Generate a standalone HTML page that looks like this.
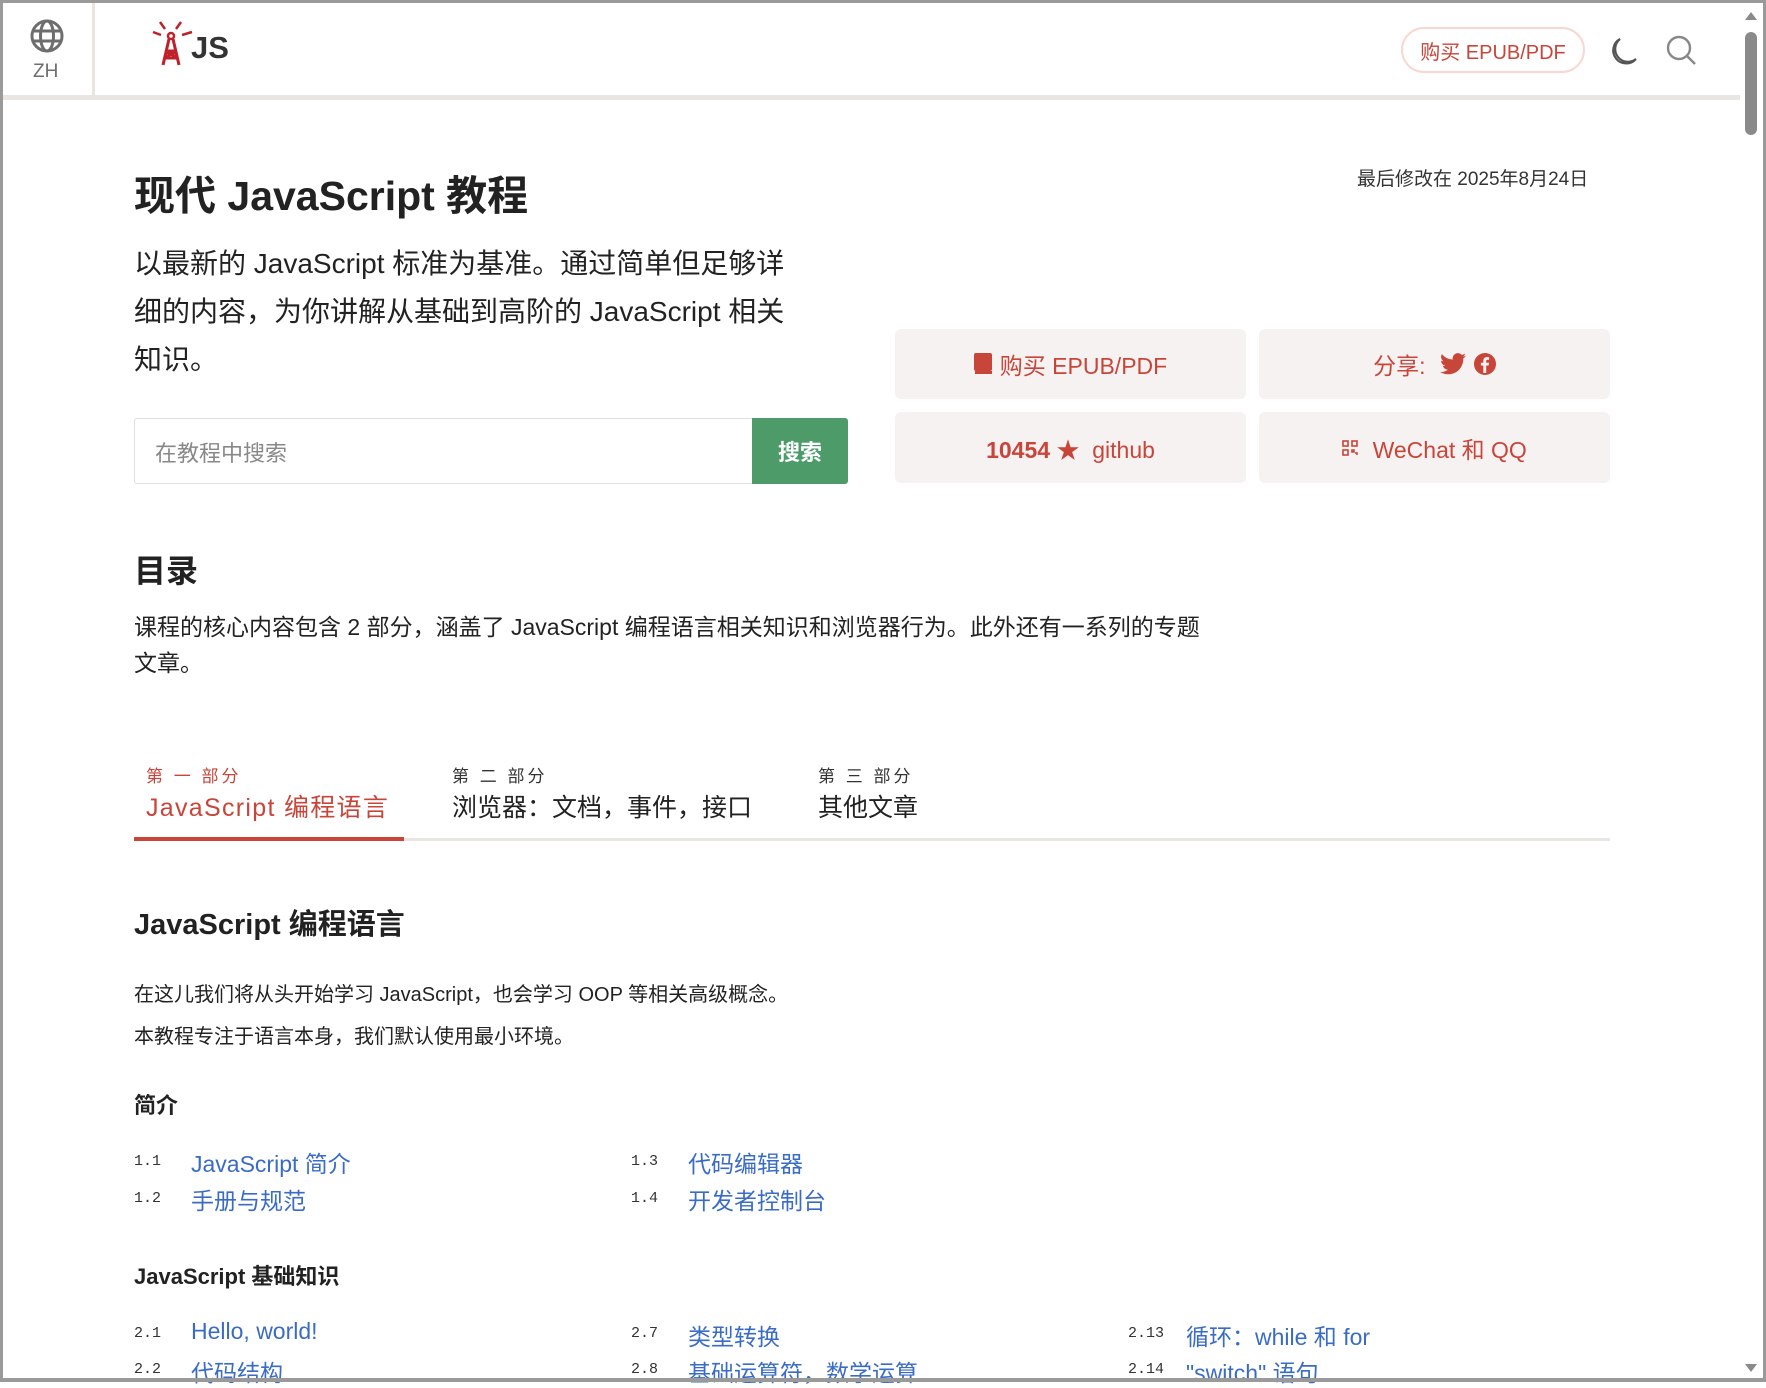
<!DOCTYPE html>
<html><head><meta charset="utf-8"><style>
*{margin:0;padding:0;box-sizing:border-box}
body{width:1766px;height:1382px;overflow:hidden;background:#fff;font-family:"Liberation Sans","Noto Sans CJK SC",sans-serif;color:#333;position:relative}
.a{position:absolute;white-space:nowrap}
.frame{position:absolute;left:0;top:0;width:1766px;height:1382px;border:3px solid #9a9a9a;border-bottom-width:4px;pointer-events:none}
.red{color:#c8453a}
.card{position:absolute;background:#f7f2f2;border-radius:6px;color:#c8453a;font-size:23px;display:flex;align-items:center;justify-content:center;gap:8px}
.num{font-family:"Liberation Mono",monospace;font-size:15px;color:#333}
.lnk{color:#3a6cc6;font-size:23px}
</style></head><body>
<!-- header -->
<div class="a" style="left:92px;top:3px;width:3px;height:94px;background:#e8e5e2"></div>
<div class="a" style="left:3px;top:95px;width:1737px;height:5px;background:#e8e5e2"></div>
<svg class="a" style="left:30px;top:19px" width="34" height="34" viewBox="0 0 34 34" fill="none" stroke="#6e6e6e" stroke-width="3"><circle cx="17" cy="17" r="15"/><ellipse cx="17" cy="17" rx="6.5" ry="15"/><line x1="2" y1="12" x2="32" y2="12"/><line x1="2" y1="22" x2="32" y2="22"/></svg>
<div class="a" style="left:33px;top:61px;font-size:19px;color:#6e6e6e">ZH</div>
<svg class="a" style="left:152px;top:18px" width="50" height="50" viewBox="0 0 50 50" stroke="#c0202a" stroke-width="2.5" fill="none"><line x1="8" y1="4" x2="13" y2="11"/><line x1="29" y1="4" x2="24" y2="11"/><line x1="1" y1="14" x2="9" y2="17"/><line x1="40" y1="14" x2="30" y2="17"/><circle cx="19" cy="18" r="3"/><path d="M17 21 L11 47 M21 21 L27 47 M13 33 L25 33 M12 40 L26 40 M13 33 L26 40 M25 33 L12 40" stroke-width="3"/></svg>
<div class="a" style="left:191px;top:30px;font-size:31px;font-weight:bold;color:#333">JS</div>
<div class="a" style="left:1401px;top:27px;width:184px;height:46px;border:2px solid #f9d6d0;border-radius:23px;color:#c8453a;font-size:20px;display:flex;align-items:center;justify-content:center">购买 EPUB/PDF</div>
<svg class="a" style="left:1607px;top:36px" width="32" height="32" viewBox="0 0 32 32" fill="none" stroke="#555" stroke-width="2.2"><path d="M13 3 A13 13 0 1 0 29 23 A11 11 0 0 1 13 3 Z"/></svg>
<svg class="a" style="left:1666px;top:35px" width="32" height="32" viewBox="0 0 32 32" fill="none" stroke="#888" stroke-width="2.4"><circle cx="13" cy="13" r="11"/><line x1="21" y1="21" x2="29" y2="29"/></svg>
<!-- scrollbar -->
<div class="a" style="left:1740px;top:3px;width:23px;height:1375px;background:#fff"></div>
<div class="a" style="left:1745px;top:32px;width:12px;height:103px;background:#8a8a8a;border-radius:6px"></div>
<div class="a" style="left:1745px;top:12px;width:0;height:0;border-left:6px solid transparent;border-right:6px solid transparent;border-bottom:8px solid #8a8a8a"></div>
<div class="a" style="left:1745px;top:1364px;width:0;height:0;border-left:6px solid transparent;border-right:6px solid transparent;border-top:8px solid #8a8a8a"></div>

<!-- intro -->
<div class="a" style="left:134px;top:162px;font-size:41px;font-weight:bold;color:#222">现代 JavaScript 教程</div>
<div class="a" style="left:1357px;top:164px;font-size:19px;color:#333">最后修改在 2025年8月24日</div>
<div class="a" style="left:134px;top:240px;font-size:28px;line-height:48px;color:#222">以最新的 JavaScript 标准为基准。通过简单但足够详<br>细的内容，为你讲解从基础到高阶的 JavaScript 相关<br>知识。</div>
<div class="a" style="left:134px;top:418px;width:620px;height:66px;border:1px solid #e2e0de;border-radius:3px 0 0 3px;font-size:22px;color:#888;padding:17px 20px">在教程中搜索</div>
<div class="a" style="left:752px;top:418px;width:96px;height:66px;background:#4d9b68;border-radius:0 3px 3px 0;color:#fff;font-size:22px;font-weight:bold;display:flex;align-items:center;justify-content:center">搜索</div>
<div class="card" style="left:895px;top:329px;width:351px;height:70px"><svg width="18" height="22" viewBox="0 0 18 22"><rect x="0" y="0" width="18" height="18" rx="2" fill="#c8453a"/><rect x="1" y="18" width="17" height="3" fill="#c8453a"/></svg><span>购买 EPUB/PDF</span></div>
<div class="card" style="left:1259px;top:329px;width:351px;height:70px"><span>分享:&nbsp;</span><svg width="26" height="22" viewBox="0 0 24 20"><path fill="#c8453a" d="M24 2.4a10 10 0 0 1-2.8.8A5 5 0 0 0 23.3.4a10 10 0 0 1-3.1 1.2A4.9 4.9 0 0 0 11.8 6 14 14 0 0 1 1.7.9a4.9 4.9 0 0 0 1.5 6.6A4.9 4.9 0 0 1 1 6.9a4.9 4.9 0 0 0 3.9 4.8 5 5 0 0 1-2.2.1 4.9 4.9 0 0 0 4.6 3.4A9.9 9.9 0 0 1 0 17.3 14 14 0 0 0 7.5 19.5c9.1 0 14-7.5 14-14v-.6A10 10 0 0 0 24 2.4z"/></svg><svg width="22" height="22" viewBox="0 0 22 22"><circle cx="11" cy="11" r="11" fill="#c8453a"/><path d="M12.2 20V12.5h2.4l.4-2.8h-2.8V8c0-.8.3-1.3 1.4-1.3h1.5V4.2a18 18 0 0 0-2.2-.1c-2.2 0-3.6 1.3-3.6 3.7v1.9H6.9v2.8h2.4V20z" fill="#f7f2f2"/></svg></div>
<div class="card" style="left:895px;top:412px;width:351px;height:71px"><span><b>10454 ★</b>&nbsp; github</span></div>
<div class="card" style="left:1259px;top:412px;width:351px;height:71px"><svg width="16" height="16" viewBox="0 0 16 16" fill="none" stroke="#c8453a" stroke-width="1.6"><rect x="1" y="1" width="5" height="5"/><rect x="10" y="1" width="5" height="5"/><rect x="1" y="10" width="5" height="5"/><path d="M10 10h2v2h-2zM13 13h2v2"/></svg><span>&nbsp;WeChat 和 QQ</span></div>

<!-- toc -->
<div class="a" style="left:134px;top:546px;font-size:32px;font-weight:bold;color:#222">目录</div>
<div class="a" style="left:134px;top:609px;font-size:23px;line-height:36px;color:#222">课程的核心内容包含 2 部分，涵盖了 JavaScript 编程语言相关知识和浏览器行为。此外还有一系列的专题<br>文章。</div>

<div class="a red" style="left:146px;top:762px;font-size:17px;letter-spacing:3px">第 一 部分</div>
<div class="a red" style="left:146px;top:788px;font-size:25px;letter-spacing:1.3px">JavaScript 编程语言</div>
<div class="a" style="left:452px;top:762px;font-size:17px;letter-spacing:3px">第 二 部分</div>
<div class="a" style="left:452px;top:788px;font-size:25px;color:#222;letter-spacing:0px">浏览器：文档，事件，接口</div>
<div class="a" style="left:818px;top:762px;font-size:17px;letter-spacing:3px">第 三 部分</div>
<div class="a" style="left:818px;top:788px;font-size:25px;color:#222;letter-spacing:0px">其他文章</div>
<div class="a" style="left:134px;top:838px;width:1476px;height:3px;background:#e8e5e2"></div>
<div class="a" style="left:134px;top:837px;width:270px;height:4px;background:#c8453a"></div>

<div class="a" style="left:134px;top:901px;font-size:29px;font-weight:bold;color:#222">JavaScript 编程语言</div>
<div class="a" style="left:134px;top:978px;font-size:20px;color:#222">在这儿我们将从头开始学习 JavaScript，也会学习 OOP 等相关高级概念。</div>
<div class="a" style="left:134px;top:1020px;font-size:20px;color:#222">本教程专注于语言本身，我们默认使用最小环境。</div>
<div class="a" style="left:134px;top:1088px;font-size:22px;font-weight:bold;color:#222">简介</div>

<div class="a num" style="left:134px;top:1153px">1.1</div><div class="a lnk" style="left:191px;top:1145px">JavaScript 简介</div>
<div class="a num" style="left:134px;top:1190px">1.2</div><div class="a lnk" style="left:191px;top:1182px">手册与规范</div>
<div class="a num" style="left:631px;top:1153px">1.3</div><div class="a lnk" style="left:688px;top:1145px">代码编辑器</div>
<div class="a num" style="left:631px;top:1190px">1.4</div><div class="a lnk" style="left:688px;top:1182px">开发者控制台</div>

<div class="a" style="left:134px;top:1259px;font-size:22px;font-weight:bold;color:#222">JavaScript 基础知识</div>
<div class="a num" style="left:134px;top:1325px">2.1</div><div class="a lnk" style="left:191px;top:1318px">Hello, world!</div>
<div class="a num" style="left:134px;top:1361px">2.2</div><div class="a lnk" style="left:191px;top:1354px">代码结构</div>
<div class="a num" style="left:631px;top:1325px">2.7</div><div class="a lnk" style="left:688px;top:1318px">类型转换</div>
<div class="a num" style="left:631px;top:1361px">2.8</div><div class="a lnk" style="left:688px;top:1354px">基础运算符，数学运算</div>
<div class="a num" style="left:1128px;top:1325px">2.13</div><div class="a lnk" style="left:1186px;top:1318px">循环：while 和 for</div>
<div class="a num" style="left:1128px;top:1361px">2.14</div><div class="a lnk" style="left:1186px;top:1354px">"switch" 语句</div>

<div class="frame"></div>
</body></html>
